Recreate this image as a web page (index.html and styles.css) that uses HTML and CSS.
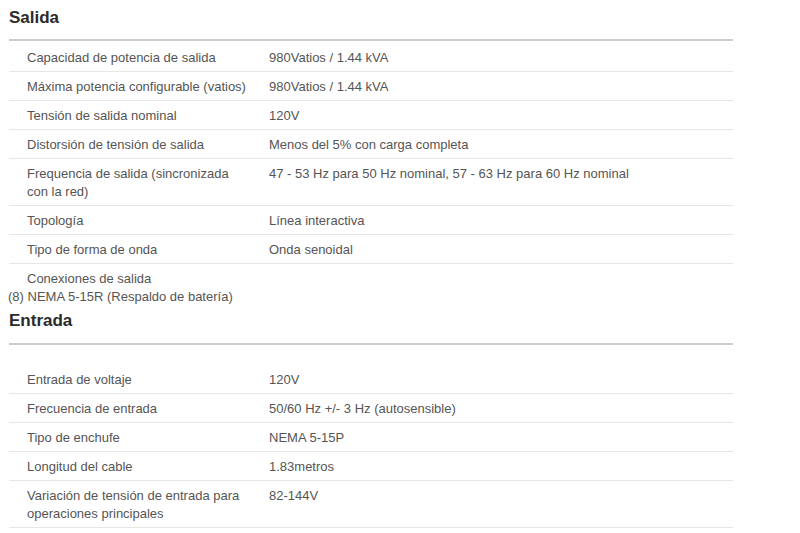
FILE: index.html
```html
<!DOCTYPE html>
<html lang="es">
<head>
<meta charset="utf-8">
<title>Especificaciones</title>
<link rel="stylesheet" href="styles.css">
</head>
<body>
  <h2 class="spec-title">Salida</h2>
  <div class="spec-table">
    <div class="row"><div class="label">Capacidad de potencia de salida</div><div class="value">980Vatios / 1.44 kVA</div></div>
    <div class="row"><div class="label">Máxima potencia configurable (vatios)</div><div class="value">980Vatios / 1.44 kVA</div></div>
    <div class="row"><div class="label">Tensión de salida nominal</div><div class="value">120V</div></div>
    <div class="row"><div class="label">Distorsión de tensión de salida</div><div class="value">Menos del 5% con carga completa</div></div>
    <div class="row"><div class="label">Frequencia de salida (sincronizada con la red)</div><div class="value">47 - 53 Hz para 50 Hz nominal, 57 - 63 Hz para 60 Hz nominal</div></div>
    <div class="row"><div class="label">Topología</div><div class="value">Línea interactiva</div></div>
    <div class="row"><div class="label">Tipo de forma de onda</div><div class="value">Onda senoidal</div></div>
    <div class="row row-open"><div class="label">Conexiones de salida</div></div>
  </div>
  <div class="orphan">(8) NEMA 5-15R (Respaldo de batería)</div>

  <h2 class="spec-title spec-title-next">Entrada</h2>
  <div class="spec-table">
    <div class="spacer"></div>
    <div class="row"><div class="label">Entrada de voltaje</div><div class="value">120V</div></div>
    <div class="row"><div class="label">Frecuencia de entrada</div><div class="value">50/60 Hz +/- 3 Hz (autosensible)</div></div>
    <div class="row"><div class="label">Tipo de enchufe</div><div class="value">NEMA 5-15P</div></div>
    <div class="row"><div class="label">Longitud del cable</div><div class="value">1.83metros</div></div>
    <div class="row"><div class="label">Variación de tensión de entrada para operaciones principales</div><div class="value">82-144V</div></div>
  </div>
</body>
</html>
```

FILE: styles.css
```css
html, body {
  background: #ffffff;
}
body {
  margin: 8px;
  font-family: "Liberation Sans", Arial, sans-serif;
  font-size: 13px;
  line-height: 18px;
  color: #555555;
}
.spec-title {
  margin: 0 0 11px 0;
  padding-left: 1px;
  font-size: 17px;
  line-height: 20px;
  font-weight: bold;
  color: #2b2b2b;
}
.spec-title-next {
  margin-top: 5px;
  margin-bottom: 12px;
}
.spec-table {
  margin-left: 1px;
  width: 724px;
  padding-top: 2px;
  border-top: 2px solid #cccccc;
}
.row {
  display: flex;
  border-bottom: 1px solid #e6e6e6;
}
.row-open {
  border-bottom: none;
}
.label {
  width: 225px;
  padding: 6px 17px 4px 18px;
  flex: none;
}
.row-open .label {
  padding-bottom: 0;
}
.value {
  flex: 1;
  padding: 6px 0 4px 0;
}
.spacer {
  height: 18px;
}
.orphan {
  margin: 0;
}
```
